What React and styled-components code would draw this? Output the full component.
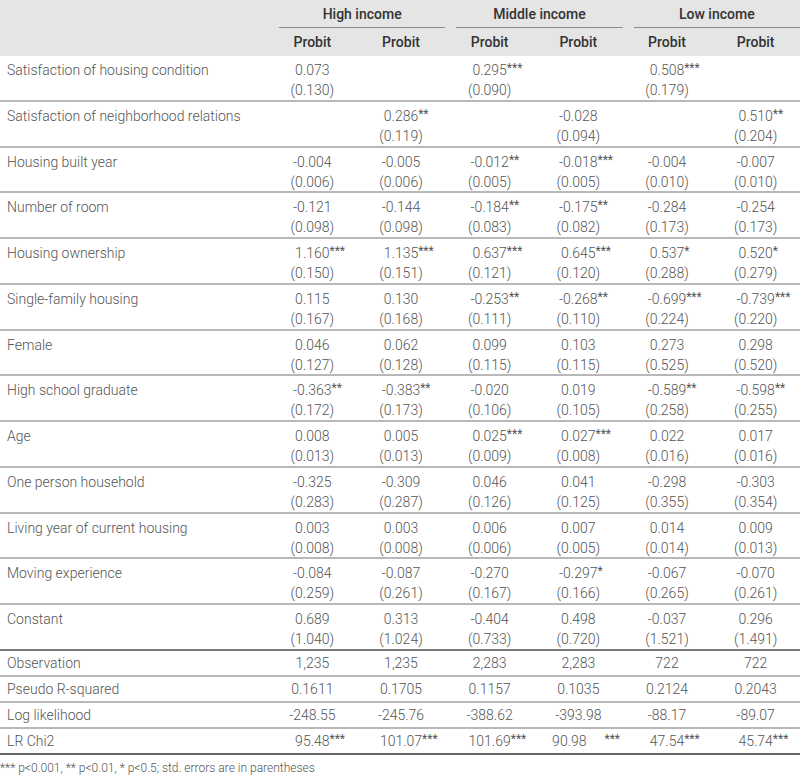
import React from "react";
import styled, { createGlobalStyle } from "styled-components";

const GlobalStyle = createGlobalStyle`
  html, body {
    margin: 0;
    padding: 0;
    background: #ffffff;
  }
  body {
    font-family: Roboto, "Liberation Sans", sans-serif;
    color: #666;
  }
`;

const COLS = "268px repeat(6, 1fr)";

const Table = styled.div`
  width: 800px;
`;

const Head = styled.div`
  background: #e5e5e5;
  display: grid;
  grid-template-columns: ${COLS};
  grid-template-rows: 28px 28px;
  font-weight: 500;
  font-size: 14px;
  color: #333;
`;

const Group = styled.div`
  grid-column: span 2;
  display: flex;
  align-items: center;
  justify-content: center;
  margin-left: 11px;
  border-bottom: 1px solid #8a8a8a;
`;

const HeadCell = styled.div`
  display: flex;
  align-items: center;
  justify-content: center;
  grid-row: 2;
`;

const Row = styled.div`
  display: grid;
  grid-template-columns: ${COLS};
  box-sizing: border-box;
  height: ${(p) => (p.$stat ? "26px" : "45.77px")};
  border-bottom: 2px solid ${(p) => p.$line || "#b8b8b8"};
  font-size: 14px;
  font-weight: 300;
  line-height: 20px;
`;

const Label = styled.div`
  padding-left: 7px;
  padding-top: ${(p) => (p.$stat ? "0" : "4px")};
  display: flex;
  align-items: ${(p) => (p.$stat ? "center" : "flex-start")};
  color: #555;
`;

const Cell = styled.div`
  display: flex;
  flex-direction: column;
  align-items: center;
  justify-content: ${(p) => (p.$stat ? "center" : "flex-start")};
  padding-top: ${(p) => (p.$stat ? "0" : "4px")};
  white-space: nowrap;
  color: #555;
`;

const Value = styled.span`
  white-space: nowrap;
`;

const Stars = styled.span`
  display: inline-block;
  width: 0;
  overflow: visible;
  font-size: 12px;
  font-weight: 400;
  vertical-align: 3px;
  line-height: 10px;
  padding-left: ${(p) => p.$gap || 0}px;
`;

const Note = styled.div`
  font-size: 12px;
  font-weight: 300;
  color: #555;
  line-height: 16px;
  padding-top: 5px;
`;

const rows = [
  ["Satisfaction of housing condition", ["0.073", "(0.130)"], null, ["0.295***", "(0.090)"], null, ["0.508***", "(0.179)"], null],
  ["Satisfaction of neighborhood relations", null, ["0.286**", "(0.119)"], null, ["-0.028", "(0.094)"], null, ["0.510**", "(0.204)"]],
  ["Housing built year", ["-0.004", "(0.006)"], ["-0.005", "(0.006)"], ["-0.012**", "(0.005)"], ["-0.018***", "(0.005)"], ["-0.004", "(0.010)"], ["-0.007", "(0.010)"]],
  ["Number of room", ["-0.121", "(0.098)"], ["-0.144", "(0.098)"], ["-0.184**", "(0.083)"], ["-0.175**", "(0.082)"], ["-0.284", "(0.173)"], ["-0.254", "(0.173)"]],
  ["Housing ownership", ["1.160***", "(0.150)"], ["1.135***", "(0.151)"], ["0.637***", "(0.121)"], ["0.645***", "(0.120)"], ["0.537*", "(0.288)"], ["0.520*", "(0.279)"]],
  ["Single-family housing", ["0.115", "(0.167)"], ["0.130", "(0.168)"], ["-0.253**", "(0.111)"], ["-0.268**", "(0.110)"], ["-0.699***", "(0.224)"], ["-0.739***", "(0.220)"]],
  ["Female", ["0.046", "(0.127)"], ["0.062", "(0.128)"], ["0.099", "(0.115)"], ["0.103", "(0.115)"], ["0.273", "(0.525)"], ["0.298", "(0.520)"]],
  ["High school graduate", ["-0.363**", "(0.172)"], ["-0.383**", "(0.173)"], ["-0.020", "(0.106)"], ["0.019", "(0.105)"], ["-0.589**", "(0.258)"], ["-0.598**", "(0.255)"]],
  ["Age", ["0.008", "(0.013)"], ["0.005", "(0.013)"], ["0.025***", "(0.009)"], ["0.027***", "(0.008)"], ["0.022", "(0.016)"], ["0.017", "(0.016)"]],
  ["One person household", ["-0.325", "(0.283)"], ["-0.309", "(0.287)"], ["0.046", "(0.126)"], ["0.041", "(0.125)"], ["-0.298", "(0.355)"], ["-0.303", "(0.354)"]],
  ["Living year of current housing", ["0.003", "(0.008)"], ["0.003", "(0.008)"], ["0.006", "(0.006)"], ["0.007", "(0.005)"], ["0.014", "(0.014)"], ["0.009", "(0.013)"]],
  ["Moving experience", ["-0.084", "(0.259)"], ["-0.087", "(0.261)"], ["-0.270", "(0.167)"], ["-0.297*", "(0.166)"], ["-0.067", "(0.265)"], ["-0.070", "(0.261)"]],
  ["Constant", ["0.689", "(1.040)"], ["0.313", "(1.024)"], ["-0.404", "(0.733)"], ["0.498", "(0.720)"], ["-0.037", "(1.521)"], ["0.296", "(1.491)"]],
];

const stats = [
  ["Observation", ["1,235", "1,235", "2,283", "2,283", "722", "722"]],
  ["Pseudo R-squared", ["0.1611", "0.1705", "0.1157", "0.1035", "0.2124", "0.2043"]],
  ["Log likelihood", ["-248.55", "-245.76", "-388.62", "-393.98", "-88.17", "-89.07"]],
  ["LR Chi2", ["95.48***", "101.07***", "101.69***", "90.98 ***", "47.54***", "45.74***"]],
];

// splits "0.295***" into number and stars; a space before the stars means they sit apart
const Num = ({ text }) => {
  const m = text.match(/^(.*?)( ?)(\**)$/);
  return (
    <Value>
      {m[1]}
      {m[3] && <Stars $gap={m[2] ? 18 : 0}>{m[3]}</Stars>}
    </Value>
  );
};

const App = () => {
  return (
    <>
      <GlobalStyle />
      <Table>
        <Head>
          <div style={{ gridRow: "1 / span 2" }} />
          <Group>High income</Group>
          <Group>Middle income</Group>
          <Group>Low income</Group>
          {[0, 1, 2, 3, 4, 5].map((i) => (
            <HeadCell key={i}>Probit</HeadCell>
          ))}
        </Head>
        {rows.map(([label, ...cells], r) => (
          <Row key={label} $line={r === rows.length - 1 ? "#777" : null}>
            <Label>{label}</Label>
            {cells.map((c, i) => (
              <Cell key={i}>
                {c && (
                  <>
                    <Num text={c[0]} />
                    <Value>{c[1]}</Value>
                  </>
                )}
              </Cell>
            ))}
          </Row>
        ))}
        {stats.map(([label, vals], r) => (
          <Row key={label} $stat $line={r === stats.length - 1 ? "#666" : null}>
            <Label $stat>{label}</Label>
            {vals.map((v, i) => (
              <Cell key={i} $stat>
                <Num text={v} />
              </Cell>
            ))}
          </Row>
        ))}
      </Table>
      <Note>*** p&lt;0.001, ** p&lt;0.01, * p&lt;0.5; std. errors are in parentheses</Note>
    </>
  );
};

export default App;
